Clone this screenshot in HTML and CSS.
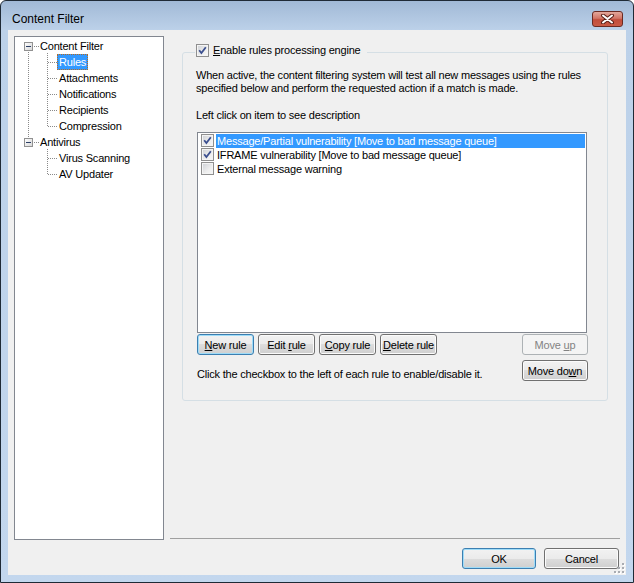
FILE: index.html
```html
<!DOCTYPE html>
<html lang="en">

<head>
    <meta charset="UTF-8">
    <meta name="viewport" content="width=device-width, initial-scale=1.0">
    <title>Content Filter</title>
    <link rel="stylesheet" href="styles.css">
</head>

<body>

    <div class="window">
        <div class="titlebar">
            <span class="title">Content Filter</span>
            <button class="close-btn" type="button" aria-label="Close">
                <svg width="15" height="10" viewBox="0 0 15 10">
                    <path d="M3 1.5 L12 8.5 M12 1.5 L3 8.5" stroke="#5a2018" stroke-width="4" stroke-linecap="round" />
                    <path d="M3 1.5 L12 8.5 M12 1.5 L3 8.5" stroke="#ffffff" stroke-width="2" stroke-linecap="round" />
                </svg>
            </button>
        </div>

        <div class="client">
            <div class="tree">
                <svg class="tree-lines" width="60" height="150" viewBox="0 0 60 150">
                    <g class="dots" stroke="#8a8a8a" stroke-width="1" stroke-dasharray="1 1" shape-rendering="crispEdges" fill="none">
                        <path d="M19 9.5 H25 M13.5 15 V101 M32.5 16 V90 M33 25.5 H42 M33 41.5 H42 M33 57.5 H42 M33 73.5 H42 M33 89.5 H42" />
                        <path d="M19 105.5 H25 M32.5 112 V138 M33 121.5 H42 M33 137.5 H42" />
                    </g>
                    <defs>
                        <linearGradient id="exp" x1="0" y1="0" x2="1" y2="1">
                            <stop offset="0" stop-color="#ffffff" />
                            <stop offset="1" stop-color="#d6d6d6" />
                        </linearGradient>
                    </defs>
                    <rect x="9.5" y="5.5" width="8" height="8" fill="url(#exp)" stroke="#919191" shape-rendering="crispEdges" />
                    <path d="M11 9.5 H16" stroke="#2c3f66" shape-rendering="crispEdges" />
                    <rect x="9.5" y="101.5" width="8" height="8" fill="url(#exp)" stroke="#919191" shape-rendering="crispEdges" />
                    <path d="M11 105.5 H16" stroke="#2c3f66" shape-rendering="crispEdges" />
                </svg>
                <ul class="tree-list">
                    <li class="root"><span class="node">Content Filter</span></li>
                    <li class="child"><span class="node selected">Rules</span></li>
                    <li class="child"><span class="node">Attachments</span></li>
                    <li class="child"><span class="node">Notifications</span></li>
                    <li class="child"><span class="node">Recipients</span></li>
                    <li class="child"><span class="node">Compression</span></li>
                    <li class="root"><span class="node">Antivirus</span></li>
                    <li class="child"><span class="node">Virus Scanning</span></li>
                    <li class="child"><span class="node">AV Updater</span></li>
                </ul>
            </div>

            <div class="pane">
                <fieldset class="group">
                    <legend>
                        <span class="chk"><svg width="11" height="11" viewBox="0 0 11 11"><polyline points="2.2,5.2 4.4,8 8.8,2.2" fill="none" stroke="#3b4f8f" stroke-width="1.8" /></svg></span>
                        <span><u>E</u>nable rules processing engine</span>
                    </legend>

                    <p class="intro">When active, the content filtering system will test all new messages using the rules<br>specified below and perform the requested action if a match is made.</p>
                    <p class="hint">Left click on item to see description</p>

                    <ul class="rules-list">
                        <li class="selected">
                            <span class="chk"><svg width="11" height="11" viewBox="0 0 11 11"><polyline points="2.2,5.2 4.4,8 8.8,2.2" fill="none" stroke="#3b4f8f" stroke-width="1.8" /></svg></span>
                            <span class="label">Message/Partial vulnerability [Move to bad message queue]</span>
                        </li>
                        <li>
                            <span class="chk"><svg width="11" height="11" viewBox="0 0 11 11"><polyline points="2.2,5.2 4.4,8 8.8,2.2" fill="none" stroke="#3b4f8f" stroke-width="1.8" /></svg></span>
                            <span class="label">IFRAME vulnerability [Move to bad message queue]</span>
                        </li>
                        <li>
                            <span class="chk"></span>
                            <span class="label">External message warning</span>
                        </li>
                    </ul>

                    <div class="rule-controls">
                        <div class="rule-left">
                            <div class="btn-row">
                                <button class="btn default" type="button"><u>N</u>ew rule</button>
                                <button class="btn" type="button">Edit <u>r</u>ule</button>
                                <button class="btn" type="button"><u>C</u>opy rule</button>
                                <button class="btn" type="button"><u>D</u>elete rule</button>
                            </div>
                            <p class="note">Click the checkbox to the left of each rule to enable/disable it.</p>
                        </div>
                        <div class="rule-right">
                            <button class="btn move" type="button" disabled>Move <u>u</u>p</button>
                            <button class="btn move" type="button">Move do<u>w</u>n</button>
                        </div>
                    </div>
                </fieldset>

                <div class="footer">
                    <button class="btn dlg ok default" type="button">OK</button>
                    <button class="btn dlg cancel" type="button">Cancel</button>
                </div>
            </div>

            <svg class="grip" width="12" height="12" viewBox="0 0 12 12">
                <g fill="#ffffff">
                    <rect x="10" y="2" width="2" height="2" /><rect x="10" y="6" width="2" height="2" /><rect x="6" y="6" width="2" height="2" />
                    <rect x="10" y="10" width="2" height="2" /><rect x="6" y="10" width="2" height="2" /><rect x="2" y="10" width="2" height="2" />
                </g>
                <g fill="#a9acb2">
                    <rect x="9" y="1" width="2" height="2" /><rect x="9" y="5" width="2" height="2" /><rect x="5" y="5" width="2" height="2" />
                    <rect x="9" y="9" width="2" height="2" /><rect x="5" y="9" width="2" height="2" /><rect x="1" y="9" width="2" height="2" />
                </g>
            </svg>
        </div>
    </div>

</body>

</html>
```

FILE: styles.css
```css
body {
    margin: 0;
    padding: 0;
    background-color: #ffffff;
    font-family: 'Liberation Sans', Arial, sans-serif;
    font-size: 11px;
    color: #000;
}

.window {
    width: 634px;
    height: 583px;
    box-sizing: border-box;
    border: 1px solid #1f2a36;
    border-radius: 6px 6px 0 0;
    padding: 0 7px 7px;
    display: flex;
    flex-direction: column;
    background: linear-gradient(to bottom, #a1b9d6 0px, #bcd1e9 29px, #c3d7ee 100%);
}

/* title bar */

.titlebar {
    height: 29px;
    flex: none;
    display: flex;
    align-items: flex-start;
}

.title {
    font-size: 12px;
    line-height: 14px;
    margin: 11px 0 0 4px;
    flex: 1;
}

.close-btn {
    width: 31px;
    height: 16px;
    margin: 10px 3px 0 0;
    padding: 0;
    border: 1px solid #6b2a22;
    border-radius: 3px;
    background: linear-gradient(to bottom, #e3a89c 0%, #d27566 45%, #c24d3b 55%, #c95a45 100%);
    display: flex;
    align-items: center;
    justify-content: center;
}

/* client area */

.client {
    flex: 1;
    background-color: #f0f0f0;
    padding: 6px;
    display: flex;
    position: relative;
    letter-spacing: -0.2px;
}

.grip {
    position: absolute;
    right: 1px;
    bottom: 1px;
}

/* tree view */

.tree {
    width: 150px;
    height: 504px;
    flex: none;
    box-sizing: border-box;
    border: 1px solid #828790;
    background-color: #fff;
    position: relative;
}

.tree-lines {
    position: absolute;
    left: 0;
    top: 0;
}

.tree-list {
    list-style: none;
    margin: 0;
    padding: 1px 0 0;
    position: relative;
}

.tree-list li {
    height: 16px;
    display: flex;
    align-items: center;
}

.tree-list .root {
    padding-left: 23px;
}

.tree-list .child {
    padding-left: 42px;
}

.node {
    line-height: 14px;
    padding: 0 1px;
    border: 1px solid transparent;
    white-space: nowrap;
}

.node.selected {
    background-color: #3399ff;
    color: #fff;
    border: 1px dotted #b86a1e;
}

/* right pane */

.pane {
    flex: 1;
    margin-left: 6px;
    display: flex;
    flex-direction: column;
}

.group {
    margin: 8px 12px 0 12px;
    padding: 8px 19px 19px 13px;
    border: 1px solid #d5dfe5;
    border-radius: 3px;
    min-width: 0;
}

.group legend {
    display: flex;
    align-items: center;
    gap: 4px;
    padding: 0 6px 4px 1px;
    margin-left: -1px;
    line-height: 13px;
}

.chk {
    width: 13px;
    height: 13px;
    flex: none;
    box-sizing: border-box;
    border: 1px solid #8f8f8f;
    background: linear-gradient(135deg, #cdd0d5 0%, #eeeeee 60%, #f8f8f8 100%);
    box-shadow: inset 0 0 0 1px #f4f4f4;
    display: flex;
}

.intro,
.hint,
.note {
    margin: 0;
    line-height: 13px;
}

.hint {
    margin-top: 14px;
}

/* rules list box */

.rules-list {
    list-style: none;
    width: 390px;
    height: 201px;
    box-sizing: border-box;
    margin: 10px 0 0 1px;
    padding: 1px 1px 0 0;
    border: 1px solid #828790;
    background-color: #fff;
}

.rules-list li {
    height: 14px;
    display: flex;
    align-items: flex-start;
    padding-left: 3px;
}

.rules-list .label {
    flex: 1;
    margin-left: 2px;
    padding-left: 1px;
    line-height: 14px;
    white-space: nowrap;
}

.rules-list .selected .label {
    background-color: #3399ff;
    color: #fff;
}

/* buttons */

.btn {
    font-family: inherit;
    font-size: 11px;
    letter-spacing: -0.2px;
    color: #000;
    height: 21px;
    padding: 0;
    box-sizing: border-box;
    border: 1px solid #707070;
    border-radius: 3px;
    background: linear-gradient(to bottom, #f2f2f2 0%, #ebebeb 50%, #dddddd 50%, #cfcfcf 100%);
    box-shadow: inset 0 0 0 1px #fbfbfb;
}

.btn.default {
    border-color: #3c7fb1;
    box-shadow: inset 0 0 0 1px #9fdcf8;
}

.btn:disabled {
    border-color: #adb2b5;
    background: #f4f4f4;
    box-shadow: none;
    color: #838383;
}

.rule-controls {
    margin-top: 1px;
    display: flex;
    justify-content: space-between;
}

.btn-row {
    display: flex;
    gap: 4px;
    margin-left: 1px;
}

.btn-row .btn {
    width: 57px;
}

.note {
    margin-top: 13px;
    margin-left: 1px;
}

.rule-right {
    display: flex;
    flex-direction: column;
    gap: 5px;
}

.btn.move {
    width: 66px;
}

/* dialog footer */

.footer {
    margin-top: auto;
    border-top: 1px solid #a0a0a0;
    padding: 9px 1px 0 0;
    display: flex;
    justify-content: flex-end;
    gap: 8px;
}

.btn.ok {
    width: 74px;
}

.btn.cancel {
    width: 75px;
}
```
